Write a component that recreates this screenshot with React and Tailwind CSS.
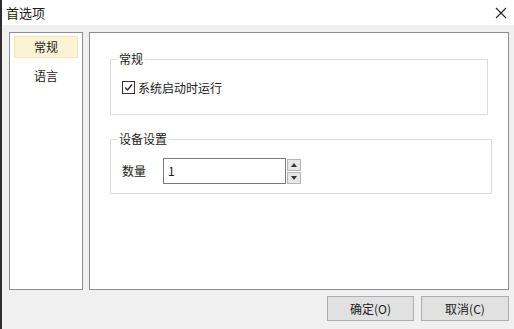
export default function App() {
  const font = { fontFamily: '"Noto Sans CJK SC", "Noto Sans", sans-serif' };
  return (
    <div className="w-[514px] h-[329px] flex overflow-hidden text-[12px] text-[#1a1a1a]" style={font}>
      <div className="w-[2px] h-full bg-[#2e2e2e]" />
      <div className="flex-1 flex flex-col bg-[#f0f0f0]">
        <div className="h-[25px] bg-white flex items-center justify-between pl-[4px] pr-[7px]">
          <span className="text-[13px] leading-none">首选项</span>
          <svg width="12" height="12" viewBox="0 0 12 12">
            <path d="M1 1 L11 11 M11 1 L1 11" stroke="#222" strokeWidth="1.1" />
          </svg>
        </div>
        <div className="pt-[7px] pl-[7px] flex gap-[6px]">
          <div className="w-[74px] h-[258px] bg-white border border-[#8a8d94] flex flex-col pt-[3px] pl-[4px]">
            <div className="w-[64px] h-[22px] bg-[#fcf3d7] border border-[#f5e6b8] flex items-center justify-center leading-none">常规</div>
            <div className="w-[64px] h-[22px] mt-[7px] flex items-center justify-center leading-none">语言</div>
          </div>
          <div className="w-[420px] h-[258px] bg-white border border-[#8a8d94] pt-[26px] pl-[20px] flex flex-col">
            <div className="relative w-[378px] h-[56px] border border-[#dcdcdc]">
              <span className="absolute left-[6px] top-[-9px] bg-white px-[2px] leading-[16px]">常规</span>
              <div className="absolute left-[11px] top-[21px] flex items-center gap-[3px]">
                <div className="w-[13px] h-[13px] border border-[#333] bg-white flex items-center justify-center">
                  <svg width="11" height="11" viewBox="0 0 11 11">
                    <path d="M2 5.5 L4.5 8 L9 2.5" stroke="#222" strokeWidth="1.2" fill="none" />
                  </svg>
                </div>
                <span className="leading-none">系统启动时运行</span>
              </div>
            </div>
            <div className="relative w-[382px] h-[55px] mt-[24px] border border-[#dcdcdc]">
              <span className="absolute left-[6px] top-[-9px] bg-white px-[2px] leading-[16px]">设备设置</span>
              <div className="absolute left-[11px] top-[18px] flex items-center">
                <span className="w-[41px] leading-none">数量</span>
                <div className="w-[123px] h-[26px] border border-[#7a7a7a] bg-white flex items-center pl-[4px] leading-none">1</div>
                <div className="ml-[1px] flex flex-col gap-[1px]">
                  <div className="w-[14px] h-[12px] bg-[#e6e6e6] border border-[#b5b5b5] flex items-center justify-center">
                    <svg width="6" height="4" viewBox="0 0 6 4"><path d="M0 4 L3 0 L6 4 Z" fill="#333" /></svg>
                  </div>
                  <div className="w-[14px] h-[12px] bg-[#e6e6e6] border border-[#b5b5b5] flex items-center justify-center">
                    <svg width="6" height="4" viewBox="0 0 6 4"><path d="M0 0 L6 0 L3 4 Z" fill="#333" /></svg>
                  </div>
                </div>
              </div>
            </div>
          </div>
        </div>
        <div className="flex justify-end gap-[7px] pr-[5px] mt-[6px]">
          <button className="w-[87px] h-[25px] bg-[#e1e1e1] border border-[#adadad] leading-none">确定(O)</button>
          <button className="w-[88px] h-[25px] bg-[#e1e1e1] border border-[#adadad] leading-none">取消(C)</button>
        </div>
      </div>
    </div>
  );
}
